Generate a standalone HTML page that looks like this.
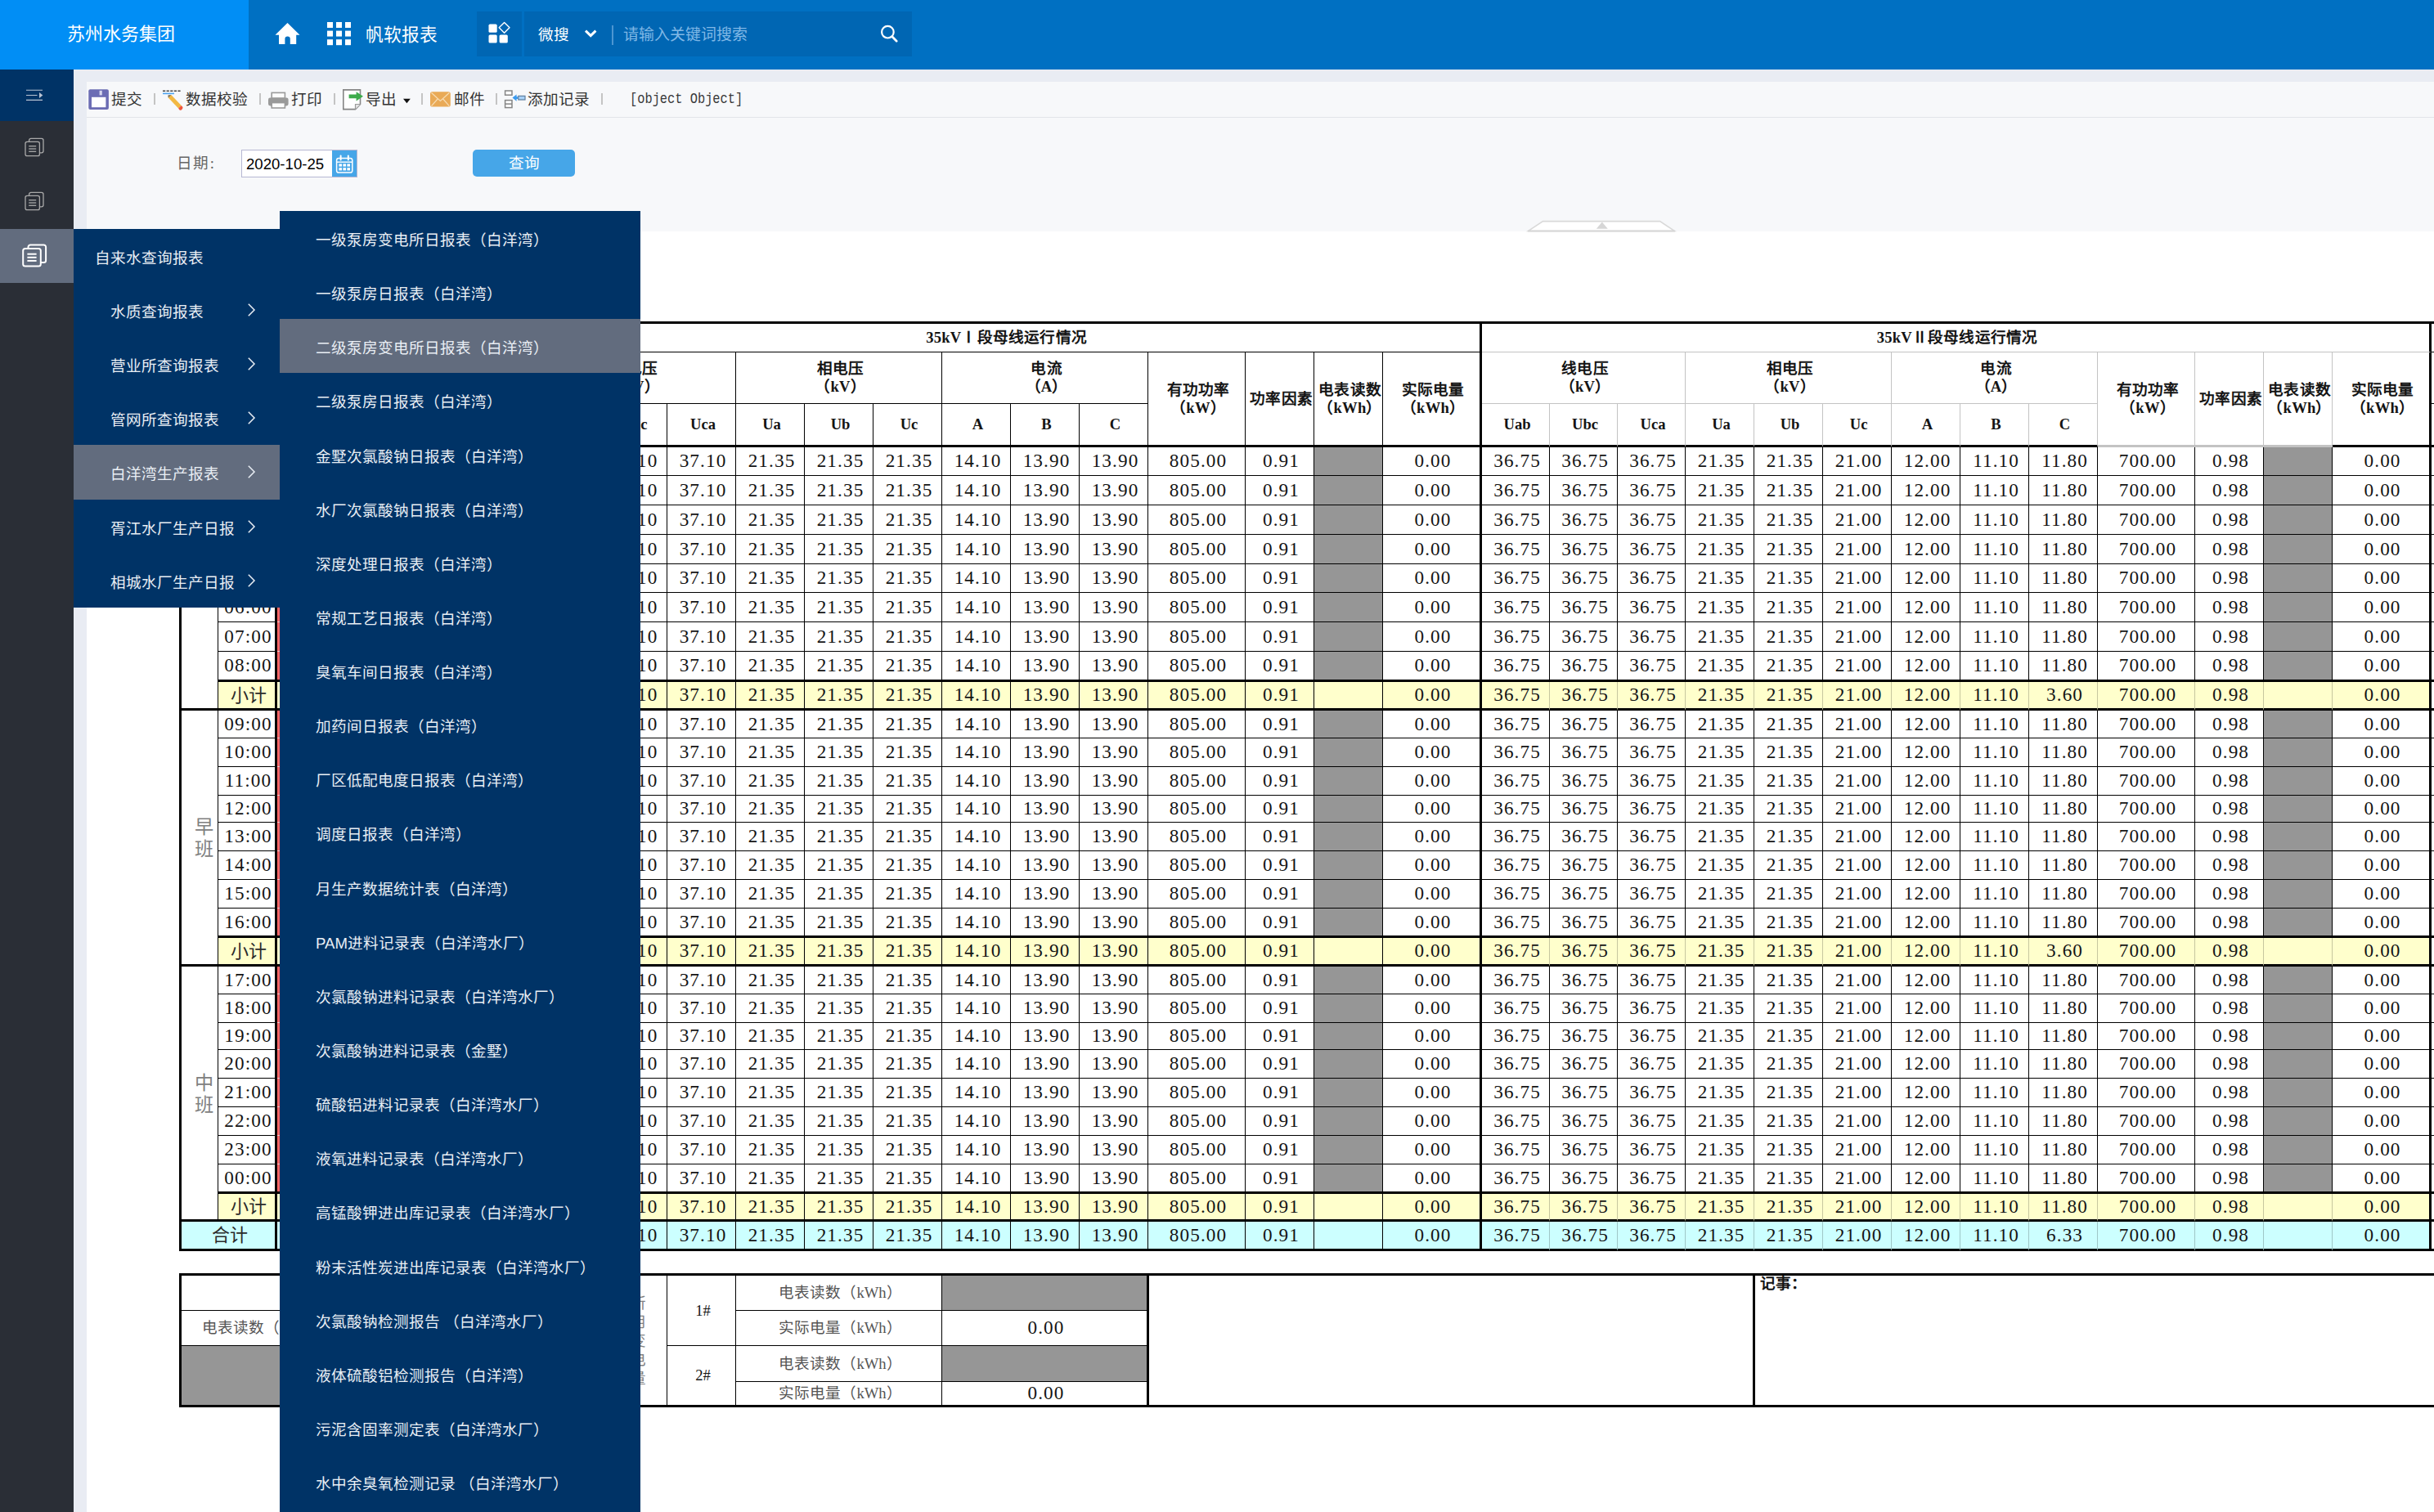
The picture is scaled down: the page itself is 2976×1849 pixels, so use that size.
<!DOCTYPE html>
<html lang="zh-CN">
<head>
<meta charset="utf-8">
<title>苏州水务集团 - 帆软报表</title>
<style>

*{box-sizing:border-box;margin:0;padding:0}
html,body{width:2976px;height:1849px;overflow:hidden}
body{position:relative;background:#e9ecf3;font-family:"Liberation Sans",sans-serif;font-size:18.6px;color:#333}
.abs{position:absolute}
svg{display:block;position:absolute;overflow:visible}

/* ---------- top header ---------- */
#hd{position:absolute;left:0;top:0;width:2976px;height:85px;background:#0070c2;color:#fff}
#logo{position:absolute;left:0;top:0;width:304px;height:85px;background:#018ef5;font-size:22px;line-height:84px;padding-left:82px;white-space:nowrap}
#brand{position:absolute;left:447px;top:0;line-height:85px;font-size:21.7px;white-space:nowrap}
.hbox{position:absolute;top:14px;height:55px;background:#0066b3}
#hb1{left:583px;width:55px}
#hb2{left:641px;width:474px}
#ws{position:absolute;left:17px;top:0;line-height:58px;font-size:18.6px;white-space:nowrap}
#hsep{position:absolute;left:107px;top:17px;width:2px;height:24px;background:#4d96d2}
#ph{position:absolute;left:121px;top:0;line-height:58px;font-size:18.9px;color:#80b8e6;white-space:nowrap}

/* ---------- left icon rail ---------- */
#rail{position:absolute;left:0;top:85px;width:90px;height:1764px;background:#2a2e36}
#rail .ham{position:absolute;left:0;top:0;width:90px;height:63px;background:#003366}
#rail .act{position:absolute;left:0;top:195px;width:90px;height:66px;background:#626c7e}

/* ---------- content ---------- */
#main{position:absolute;left:106px;top:100px;width:2870px;height:1749px;background:#fff}
#tb{position:absolute;left:0;top:0;width:2870px;height:44px;background:#f7f8fa;border-bottom:1px solid #e3e5e9;white-space:nowrap}
#tb span{position:absolute;top:0;line-height:43px;font-size:18.6px;color:#333}
#tb i{position:absolute;top:14px;width:2px;height:14px;background:#c4c4c4}
#tb .mono{font-family:"Liberation Mono",monospace;font-size:18.4px;color:#3a3a3a;transform:scaleX(.835);transform-origin:0 50%}
#pm{position:absolute;left:0;top:44px;width:2870px;height:139px;background:#f7f8fa}
#pm .lb{position:absolute;left:110px;top:41px;font-family:"Liberation Serif",serif;font-size:18.6px;line-height:30px;color:#666;letter-spacing:1.4px;white-space:nowrap}
#dt{position:absolute;left:189px;top:39px;width:142px;height:34px;background:#fff;border:1px solid #b6b7d2;font-size:18.6px;line-height:33px;color:#000;padding-left:5px}
#dt b{position:absolute;right:0;top:0;width:30px;height:32px;background:#46a6e8}
#qb{position:absolute;left:472px;top:39px;width:125px;height:33px;border-radius:5px;background:#46a6e8;color:#fff;text-align:center;line-height:33px;font-size:18.6px}

/* ---------- flyout menus ---------- */
.menu{position:absolute;background:#003366;color:#e9eef4;font-size:18.6px;white-space:nowrap}
#m1{left:90px;top:280px;width:252px;height:463px}
#m2{left:342px;top:258px;width:441px;height:1591px}
.menu div{position:absolute;left:0;width:100%;height:66.2px;line-height:71px}
.menu .on{background:#626c7e}
#m1 div{padding-left:45px}
#m1 .t{padding-left:26px}
#m2 div{padding-left:44px}
#m1 svg{left:213px;top:25px}

/* ---------- report tables ---------- */
table{position:absolute;border-collapse:separate;border-spacing:0;table-layout:fixed;font-family:"Liberation Serif",serif;color:#141414;background:#fff}
td{border-right:1px solid #000;border-bottom:1px solid #000;text-align:center;vertical-align:middle;padding:0 0 2px 4px;overflow:hidden;white-space:nowrap;font-size:23.2px;letter-spacing:1.1px;line-height:24px}
td.h{font-weight:bold;font-size:18.6px;letter-spacing:.2px;line-height:22px;padding-bottom:0;white-space:normal}
td.e{font-weight:bold;font-size:18.6px;letter-spacing:0;padding-bottom:0}
td.l{border-left:3px solid #000}
td.R{border-right:3px solid #000}
tr.T td{border-top:3px solid #000}
tr.B td{border-bottom:3px solid #000}
td.B{border-bottom:3px solid #000}
td.g{border-right-color:#c3c3c3}
td.gb{border-bottom-color:#c3c3c3}
tr.y td{background:#ffffcc}
tr.c td{background:#ccffff}
td.w{background:#fff !important}
td.k{background:#969696 !important}
td.r{background:#ff6666;border-bottom-color:#ffc9c9}
td.s{color:#808080;font-size:23.2px;line-height:27px;white-space:normal;letter-spacing:0;padding:2px 0 0 10px}
td.q{color:#555;font-size:18.6px;letter-spacing:0;padding-bottom:0}
td.n{font-size:18.6px;letter-spacing:0;padding-bottom:0}
td.z{font-size:22px;letter-spacing:0;padding:1px 0 0 4px;color:#2b2b2b}
td.u{color:#808080;padding-left:0;line-height:23px}
td.q.l{padding-left:0}
td.m{text-align:left;vertical-align:top;font-weight:bold;font-size:18.6px;padding:0 0 0 6px;letter-spacing:0;line-height:20px}
tr.y td.v,tr.c td.v{border-right-color:rgba(0,0,0,.22)}

</style>
</head>
<body>
<div id="hd">
<div id="logo">苏州水务集团</div>
<svg style="left:337px;top:28px" width="29" height="26"><path fill="#fff" d="M14.5 0L29.5 14.8H25.2V26H17.8V19.6a3.2 3.2 0 0 0-6.4 0V26H4V14.8H-.5Z"/></svg>
<svg style="left:400px;top:27px" width="29" height="29" fill="#fff"><rect x="0" y="0" width="7" height="7"/><rect x="11" y="0" width="7" height="7"/><rect x="22" y="0" width="7" height="7"/><rect x="0" y="10.6" width="7" height="7"/><rect x="11" y="10.6" width="7" height="7"/><rect x="22" y="10.6" width="7" height="7"/><rect x="0" y="21.2" width="7" height="7"/><rect x="11" y="21.2" width="7" height="7"/><rect x="22" y="21.2" width="7" height="7"/></svg>
<div id="brand">帆软报表</div>
<div class="hbox" id="hb1"><svg style="left:0;top:0" width="55" height="55"><g fill="#fff"><rect x="14.5" y="15.6" width="10.2" height="10.2" rx="1.6"/><rect x="14.5" y="28.4" width="10.2" height="10.2" rx="1.6"/><rect x="27.6" y="28.4" width="10.2" height="10.2" rx="1.6"/></g><path d="M33.6 13.4L40 19.8L33.6 26.2L27.2 19.8Z" fill="none" stroke="#fff" stroke-width="1.4" stroke-linejoin="round"/></svg></div>
<div class="hbox" id="hb2"><div id="ws">微搜</div>
<svg style="left:0;top:0" width="474" height="55"><path d="M75 23.6l6.2 6 6.2-6" fill="none" stroke="#fff" stroke-width="3"/><circle cx="444.4" cy="25.2" r="7.3" fill="none" stroke="#fff" stroke-width="2.2"/><path d="M449.8 30.8l5.4 5.4" stroke="#fff" stroke-width="2.8" stroke-linecap="round"/></svg>
<div id="hsep"></div><div id="ph">请输入关键词搜索</div></div>
</div>
<div id="rail"><div class="ham"></div><div class="act"></div>
<svg style="left:0;top:0" width="90" height="270">
<g stroke="#b9c3d3" stroke-width="1.1" fill="none"><path d="M32 25.3H52M32 31.5H45.5M32 37.4H52"/></g><path d="M48 28v7l4.4-3.5z" fill="#b9c3d3"/>
<g fill="none" stroke="#a9a9a9" stroke-width="1.3"><rect x="31" y="88.3" width="17.4" height="17.4" rx="2.2"/><path d="M35.6 88.3V86.6a2.2 2.2 0 0 1 2.2 -2.2H50.8a2.2 2.2 0 0 1 2.2 2.2V99.6a2.2 2.2 0 0 1 -2.2 2.2H48.4"/><path d="M35.2 93.7H44.2"/><path d="M35.2 97.0H44.2"/><path d="M35.2 100.3H44.2"/></g>
<g fill="none" stroke="#a9a9a9" stroke-width="1.3"><rect x="31" y="154.3" width="17.4" height="17.4" rx="2.2"/><path d="M35.6 154.3V152.6a2.2 2.2 0 0 1 2.2 -2.2H50.8a2.2 2.2 0 0 1 2.2 2.2V165.6a2.2 2.2 0 0 1 -2.2 2.2H48.4"/><path d="M35.2 159.7H44.2"/><path d="M35.2 163.0H44.2"/><path d="M35.2 166.3H44.2"/></g>
<g fill="none" stroke="#ffffff" stroke-width="2"><rect x="28.2" y="219" width="21.6" height="21.6" rx="2.6"/><path d="M34.5 219.0V217.1a2.6 2.6 0 0 1 2.6 -2.6H53.5a2.6 2.6 0 0 1 2.6 2.6V233.5a2.6 2.6 0 0 1 -2.6 2.6H49.8"/><path d="M33.4 225.7H44.6"/><path d="M33.4 229.8H44.6"/><path d="M33.4 233.9H44.6"/></g>
</svg></div>
<div id="main">
<div id="tb"><svg style="left:0;top:0" width="660" height="44">
<rect x="2.3" y="9.3" width="24.6" height="24.6" rx="2" fill="#6c6db4"/><rect x="6" y="18.8" width="17.4" height="12.4" fill="#fff"/><rect x="15.6" y="10.8" width="3.2" height="5.6" fill="#d6d6ee"/>
<path d="M93 11.2H115" stroke="#444" stroke-width="1.6" stroke-dasharray="3.2 1.4"/><path d="M93 14.4H107" stroke="#4da3f0" stroke-width="1.6"/>
<path d="M99.5 16.5l3.8-.6 12.4 13.2-3.6 3.4L99.8 19.6z" fill="#f2b844"/><path d="M99.5 16.5l3.8-.6-3.5 3.7z" fill="#6e6e6e"/><path d="M115.7 29.1l1.3 1.5a2 2 0 0 1-.1 2.7l-.9.9a2 2 0 0 1-2.7 0l-1.2-1.7z" fill="#f0563c"/>
<rect x="222" y="19.4" width="24.6" height="10" rx="2.4" fill="#9a9a9a"/><rect x="226.2" y="13.4" width="16.2" height="6.6" fill="#fdfdfd" stroke="#9a9a9a" stroke-width="1.6"/><rect x="226.2" y="25.6" width="16.2" height="6.4" fill="#fdfdfd" stroke="#9a9a9a" stroke-width="1.6"/>
<path d="M313.8 9.9H334.5V27.5L328.5 33.6H313.8Z" fill="#fff" stroke="#858585" stroke-width="1.6"/><path d="M334.5 27.5H328.5V33.6" fill="#e6e6e6" stroke="#9a9a9a" stroke-width="1.2"/>
<path d="M320.6 15.4H329.6V12.2L338 17.8L329.6 23.4V20.2H320.6Z" fill="#3dab4b"/>
<path d="M387 20.8H395.8L391.4 26.2Z" fill="#111"/>
<rect x="420" y="12.2" width="24.8" height="18.4" rx="2.6" fill="#e9aa57"/><path d="M421.5 13.5L432.4 23.4L443.3 13.5M421.5 29.6L429.3 20.8M443.3 29.6L435.5 20.8" fill="none" stroke="#f7dcb2" stroke-width="1.3"/>
<g fill="#fff" stroke="#858585" stroke-width="1.5"><rect x="511.6" y="11" width="8.4" height="5.2"/><rect x="511.6" y="22.6" width="8.4" height="9"/><path d="M511.6 27.1H520"/></g>
<path d="M520.4 19.6l5.2-4.2v2.8h1.8v2.8h-1.8v2.8z" fill="#3c9bef"/><rect x="527.8" y="17.4" width="8.2" height="4.6" fill="#a9d1f7" stroke="#5f7f9f" stroke-width="1.2"/>
</svg>
<span style="left:30px">提交</span><i style="left:82px"></i>
<span style="left:121px">数据校验</span><i style="left:211px"></i>
<span style="left:250px">打印</span><i style="left:302px"></i>
<span style="left:341px">导出</span><i style="left:409px"></i>
<span style="left:449px">邮件</span><i style="left:500px"></i>
<span style="left:539px">添加记录</span><i style="left:629px"></i>
<span class="mono" style="left:664px">[object Object]</span>
</div>
<div id="pm">
<div class="lb">日期:</div>
<div id="dt">2020-10-25<b><svg style="left:0;top:0" width="30" height="32"><rect x="5.6" y="9.4" width="19.2" height="17.6" rx="2.6" fill="none" stroke="#fff" stroke-width="1.5"/><path d="M5.6 14.2H24.8" stroke="#fff" stroke-width="1.4"/><path d="M10.6 6.6V11.6M19.8 6.6V11.6" stroke="#fff" stroke-width="2" stroke-linecap="round"/><g fill="#fff"><rect x="8.4" y="16.4" width="3.6" height="3.2"/><rect x="13.4" y="16.4" width="3.6" height="3.2"/><rect x="18.4" y="16.4" width="3.6" height="3.2"/><rect x="8.4" y="21.2" width="3.6" height="3.2"/><rect x="13.4" y="21.2" width="3.6" height="3.2"/><rect x="18.4" y="21.2" width="3.6" height="3.2"/></g></svg></b></div>
<div id="qb">查询</div>
<svg style="left:1760px;top:124px" width="186" height="16"><path d="M2.6 14.4L20.5 2.6H163.6L181.4 14.4Z" fill="#fff" stroke="#d9d9d9" stroke-width="1.6"/><path d="M2 14.6H182" stroke="#d6d6d6" stroke-width="1.6"/><path d="M92.8 3.4L99.8 11.8H85.8Z" fill="#d6d6d6"/></svg>
</div>
</div>
<table id="t1" style="left:219px;top:393px;width:2838px"><colgroup><col style="width:48px"><col style="width:72px"><col style="width:103px"><col style="width:103px"><col style="width:103px"><col style="width:84px"><col style="width:84px"><col style="width:84px"><col style="width:84px"><col style="width:84px"><col style="width:84px"><col style="width:84px"><col style="width:84px"><col style="width:84px"><col style="width:119px"><col style="width:84px"><col style="width:84px"><col style="width:121px"><col style="width:83px"><col style="width:83px"><col style="width:83px"><col style="width:84px"><col style="width:84px"><col style="width:84px"><col style="width:84px"><col style="width:84px"><col style="width:84px"><col style="width:119px"><col style="width:84px"><col style="width:84px"><col style="width:121px"><col style="width:84px"></colgroup>
<tr style="height:38px" class="T"><td class="h l B" rowspan="3">班次</td><td class="h R B" rowspan="3">时间</td><td class="h" colspan="3">主变运行情况</td><td class="h R" colspan="13">35kVⅠ段母线运行情况</td><td class="h R gb" colspan="13">35kVⅡ段母线运行情况</td><td class="h"></td></tr><tr style="height:63px"><td class="h B" rowspan="2">档位</td><td class="h B" rowspan="2">油温</td><td class="h B" rowspan="2">绕温</td><td class="h" colspan="3">线电压<br>（kV）</td><td class="h" colspan="3">相电压<br>（kV）</td><td class="h" colspan="3">电流<br>（A）</td><td class="h B" rowspan="2">有功功率<br>（kW）</td><td class="h B" rowspan="2">功率因素</td><td class="h B" rowspan="2">电表读数<br>（kWh）</td><td class="h R B" rowspan="2">实际电量<br>（kWh）</td><td class="h g gb" colspan="3">线电压<br>（kV）</td><td class="h g gb" colspan="3">相电压<br>（kV）</td><td class="h g gb" colspan="3">电流<br>（A）</td><td class="h g gb B" rowspan="2">有功功率<br>（kW）</td><td class="h g gb B" rowspan="2">功率因素</td><td class="h g gb B" rowspan="2">电表读数<br>（kWh）</td><td class="h R B" rowspan="2">实际电量<br>（kWh）</td><td class="h"></td></tr><tr style="height:53px" class="B"><td class="e">Uab</td><td class="e">Ubc</td><td class="e">Uca</td><td class="e">Ua</td><td class="e">Ub</td><td class="e">Uc</td><td class="e">A</td><td class="e">B</td><td class="e">C</td><td class="e g">Uab</td><td class="e g">Ubc</td><td class="e g">Uca</td><td class="e g">Ua</td><td class="e g">Ub</td><td class="e g">Uc</td><td class="e g">A</td><td class="e g">B</td><td class="e g">C</td><td class="e"></td></tr>
<tr style="height:35px"><td class="s l B" rowspan="9">夜<br>班</td><td class="R">01:00</td><td class="r"></td><td></td><td></td><td>37.10</td><td>37.10</td><td>37.10</td><td>21.35</td><td>21.35</td><td>21.35</td><td>14.10</td><td>13.90</td><td>13.90</td><td>805.00</td><td>0.91</td><td class="k"></td><td class="R">0.00</td><td>36.75</td><td>36.75</td><td>36.75</td><td>21.35</td><td>21.35</td><td>21.00</td><td>12.00</td><td>11.10</td><td>11.80</td><td>700.00</td><td>0.98</td><td class="k"></td><td class="R">0.00</td><td></td></tr>
<tr style="height:36px"><td class="R">02:00</td><td class="r"></td><td></td><td></td><td>37.10</td><td>37.10</td><td>37.10</td><td>21.35</td><td>21.35</td><td>21.35</td><td>14.10</td><td>13.90</td><td>13.90</td><td>805.00</td><td>0.91</td><td class="k"></td><td class="R">0.00</td><td>36.75</td><td>36.75</td><td>36.75</td><td>21.35</td><td>21.35</td><td>21.00</td><td>12.00</td><td>11.10</td><td>11.80</td><td>700.00</td><td>0.98</td><td class="k"></td><td class="R">0.00</td><td></td></tr>
<tr style="height:36px"><td class="R">03:00</td><td class="r"></td><td></td><td></td><td>37.10</td><td>37.10</td><td>37.10</td><td>21.35</td><td>21.35</td><td>21.35</td><td>14.10</td><td>13.90</td><td>13.90</td><td>805.00</td><td>0.91</td><td class="k"></td><td class="R">0.00</td><td>36.75</td><td>36.75</td><td>36.75</td><td>21.35</td><td>21.35</td><td>21.00</td><td>12.00</td><td>11.10</td><td>11.80</td><td>700.00</td><td>0.98</td><td class="k"></td><td class="R">0.00</td><td></td></tr>
<tr style="height:36px"><td class="R">04:00</td><td class="r"></td><td></td><td></td><td>37.10</td><td>37.10</td><td>37.10</td><td>21.35</td><td>21.35</td><td>21.35</td><td>14.10</td><td>13.90</td><td>13.90</td><td>805.00</td><td>0.91</td><td class="k"></td><td class="R">0.00</td><td>36.75</td><td>36.75</td><td>36.75</td><td>21.35</td><td>21.35</td><td>21.00</td><td>12.00</td><td>11.10</td><td>11.80</td><td>700.00</td><td>0.98</td><td class="k"></td><td class="R">0.00</td><td></td></tr>
<tr style="height:35px"><td class="R">05:00</td><td class="r"></td><td></td><td></td><td>37.10</td><td>37.10</td><td>37.10</td><td>21.35</td><td>21.35</td><td>21.35</td><td>14.10</td><td>13.90</td><td>13.90</td><td>805.00</td><td>0.91</td><td class="k"></td><td class="R">0.00</td><td>36.75</td><td>36.75</td><td>36.75</td><td>21.35</td><td>21.35</td><td>21.00</td><td>12.00</td><td>11.10</td><td>11.80</td><td>700.00</td><td>0.98</td><td class="k"></td><td class="R">0.00</td><td></td></tr>
<tr style="height:36px"><td class="R">06:00</td><td class="r"></td><td></td><td></td><td>37.10</td><td>37.10</td><td>37.10</td><td>21.35</td><td>21.35</td><td>21.35</td><td>14.10</td><td>13.90</td><td>13.90</td><td>805.00</td><td>0.91</td><td class="k"></td><td class="R">0.00</td><td>36.75</td><td>36.75</td><td>36.75</td><td>21.35</td><td>21.35</td><td>21.00</td><td>12.00</td><td>11.10</td><td>11.80</td><td>700.00</td><td>0.98</td><td class="k"></td><td class="R">0.00</td><td></td></tr>
<tr style="height:36px"><td class="R">07:00</td><td class="r"></td><td></td><td></td><td>37.10</td><td>37.10</td><td>37.10</td><td>21.35</td><td>21.35</td><td>21.35</td><td>14.10</td><td>13.90</td><td>13.90</td><td>805.00</td><td>0.91</td><td class="k"></td><td class="R">0.00</td><td>36.75</td><td>36.75</td><td>36.75</td><td>21.35</td><td>21.35</td><td>21.00</td><td>12.00</td><td>11.10</td><td>11.80</td><td>700.00</td><td>0.98</td><td class="k"></td><td class="R">0.00</td><td></td></tr>
<tr style="height:37px" class="B"><td class="R">08:00</td><td class="r"></td><td></td><td></td><td>37.10</td><td>37.10</td><td>37.10</td><td>21.35</td><td>21.35</td><td>21.35</td><td>14.10</td><td>13.90</td><td>13.90</td><td>805.00</td><td>0.91</td><td class="k"></td><td class="R">0.00</td><td>36.75</td><td>36.75</td><td>36.75</td><td>21.35</td><td>21.35</td><td>21.00</td><td>12.00</td><td>11.10</td><td>11.80</td><td>700.00</td><td>0.98</td><td class="k"></td><td class="R">0.00</td><td></td></tr>
<tr style="height:35px" class="y B"><td class="R z">小计</td><td></td><td></td><td></td><td>37.10</td><td>37.10</td><td>37.10</td><td>21.35</td><td>21.35</td><td>21.35</td><td>14.10</td><td>13.90</td><td>13.90</td><td>805.00</td><td>0.91</td><td></td><td class="R">0.00</td><td class="v">36.75</td><td class="v">36.75</td><td class="v">36.75</td><td class="v">21.35</td><td class="v">21.35</td><td class="v">21.00</td><td class="v">12.00</td><td class="v">11.10</td><td class="v">3.60</td><td class="v">700.00</td><td class="v">0.98</td><td class="v"></td><td class="R">0.00</td><td class="w"></td></tr>
<tr style="height:34px"><td class="s l B" rowspan="9">早<br>班</td><td class="R">09:00</td><td class="r"></td><td></td><td></td><td>37.10</td><td>37.10</td><td>37.10</td><td>21.35</td><td>21.35</td><td>21.35</td><td>14.10</td><td>13.90</td><td>13.90</td><td>805.00</td><td>0.91</td><td class="k"></td><td class="R">0.00</td><td>36.75</td><td>36.75</td><td>36.75</td><td>21.35</td><td>21.35</td><td>21.00</td><td>12.00</td><td>11.10</td><td>11.80</td><td>700.00</td><td>0.98</td><td class="k"></td><td class="R">0.00</td><td></td></tr>
<tr style="height:35px"><td class="R">10:00</td><td class="r"></td><td></td><td></td><td>37.10</td><td>37.10</td><td>37.10</td><td>21.35</td><td>21.35</td><td>21.35</td><td>14.10</td><td>13.90</td><td>13.90</td><td>805.00</td><td>0.91</td><td class="k"></td><td class="R">0.00</td><td>36.75</td><td>36.75</td><td>36.75</td><td>21.35</td><td>21.35</td><td>21.00</td><td>12.00</td><td>11.10</td><td>11.80</td><td>700.00</td><td>0.98</td><td class="k"></td><td class="R">0.00</td><td></td></tr>
<tr style="height:35px"><td class="R">11:00</td><td class="r"></td><td></td><td></td><td>37.10</td><td>37.10</td><td>37.10</td><td>21.35</td><td>21.35</td><td>21.35</td><td>14.10</td><td>13.90</td><td>13.90</td><td>805.00</td><td>0.91</td><td class="k"></td><td class="R">0.00</td><td>36.75</td><td>36.75</td><td>36.75</td><td>21.35</td><td>21.35</td><td>21.00</td><td>12.00</td><td>11.10</td><td>11.80</td><td>700.00</td><td>0.98</td><td class="k"></td><td class="R">0.00</td><td></td></tr>
<tr style="height:33px"><td class="R">12:00</td><td class="r"></td><td></td><td></td><td>37.10</td><td>37.10</td><td>37.10</td><td>21.35</td><td>21.35</td><td>21.35</td><td>14.10</td><td>13.90</td><td>13.90</td><td>805.00</td><td>0.91</td><td class="k"></td><td class="R">0.00</td><td>36.75</td><td>36.75</td><td>36.75</td><td>21.35</td><td>21.35</td><td>21.00</td><td>12.00</td><td>11.10</td><td>11.80</td><td>700.00</td><td>0.98</td><td class="k"></td><td class="R">0.00</td><td></td></tr>
<tr style="height:35px"><td class="R">13:00</td><td class="r"></td><td></td><td></td><td>37.10</td><td>37.10</td><td>37.10</td><td>21.35</td><td>21.35</td><td>21.35</td><td>14.10</td><td>13.90</td><td>13.90</td><td>805.00</td><td>0.91</td><td class="k"></td><td class="R">0.00</td><td>36.75</td><td>36.75</td><td>36.75</td><td>21.35</td><td>21.35</td><td>21.00</td><td>12.00</td><td>11.10</td><td>11.80</td><td>700.00</td><td>0.98</td><td class="k"></td><td class="R">0.00</td><td></td></tr>
<tr style="height:35px"><td class="R">14:00</td><td class="r"></td><td></td><td></td><td>37.10</td><td>37.10</td><td>37.10</td><td>21.35</td><td>21.35</td><td>21.35</td><td>14.10</td><td>13.90</td><td>13.90</td><td>805.00</td><td>0.91</td><td class="k"></td><td class="R">0.00</td><td>36.75</td><td>36.75</td><td>36.75</td><td>21.35</td><td>21.35</td><td>21.00</td><td>12.00</td><td>11.10</td><td>11.80</td><td>700.00</td><td>0.98</td><td class="k"></td><td class="R">0.00</td><td></td></tr>
<tr style="height:35px"><td class="R">15:00</td><td class="r"></td><td></td><td></td><td>37.10</td><td>37.10</td><td>37.10</td><td>21.35</td><td>21.35</td><td>21.35</td><td>14.10</td><td>13.90</td><td>13.90</td><td>805.00</td><td>0.91</td><td class="k"></td><td class="R">0.00</td><td>36.75</td><td>36.75</td><td>36.75</td><td>21.35</td><td>21.35</td><td>21.00</td><td>12.00</td><td>11.10</td><td>11.80</td><td>700.00</td><td>0.98</td><td class="k"></td><td class="R">0.00</td><td></td></tr>
<tr style="height:36px" class="B"><td class="R">16:00</td><td class="r"></td><td></td><td></td><td>37.10</td><td>37.10</td><td>37.10</td><td>21.35</td><td>21.35</td><td>21.35</td><td>14.10</td><td>13.90</td><td>13.90</td><td>805.00</td><td>0.91</td><td class="k"></td><td class="R">0.00</td><td>36.75</td><td>36.75</td><td>36.75</td><td>21.35</td><td>21.35</td><td>21.00</td><td>12.00</td><td>11.10</td><td>11.80</td><td>700.00</td><td>0.98</td><td class="k"></td><td class="R">0.00</td><td></td></tr>
<tr style="height:35px" class="y B"><td class="R z">小计</td><td></td><td></td><td></td><td>37.10</td><td>37.10</td><td>37.10</td><td>21.35</td><td>21.35</td><td>21.35</td><td>14.10</td><td>13.90</td><td>13.90</td><td>805.00</td><td>0.91</td><td></td><td class="R">0.00</td><td class="v">36.75</td><td class="v">36.75</td><td class="v">36.75</td><td class="v">21.35</td><td class="v">21.35</td><td class="v">21.00</td><td class="v">12.00</td><td class="v">11.10</td><td class="v">3.60</td><td class="v">700.00</td><td class="v">0.98</td><td class="v"></td><td class="R">0.00</td><td class="w"></td></tr>
<tr style="height:34px"><td class="s l B" rowspan="9">中<br>班</td><td class="R">17:00</td><td class="r"></td><td></td><td></td><td>37.10</td><td>37.10</td><td>37.10</td><td>21.35</td><td>21.35</td><td>21.35</td><td>14.10</td><td>13.90</td><td>13.90</td><td>805.00</td><td>0.91</td><td class="k"></td><td class="R">0.00</td><td>36.75</td><td>36.75</td><td>36.75</td><td>21.35</td><td>21.35</td><td>21.00</td><td>12.00</td><td>11.10</td><td>11.80</td><td>700.00</td><td>0.98</td><td class="k"></td><td class="R">0.00</td><td></td></tr>
<tr style="height:35px"><td class="R">18:00</td><td class="r"></td><td></td><td></td><td>37.10</td><td>37.10</td><td>37.10</td><td>21.35</td><td>21.35</td><td>21.35</td><td>14.10</td><td>13.90</td><td>13.90</td><td>805.00</td><td>0.91</td><td class="k"></td><td class="R">0.00</td><td>36.75</td><td>36.75</td><td>36.75</td><td>21.35</td><td>21.35</td><td>21.00</td><td>12.00</td><td>11.10</td><td>11.80</td><td>700.00</td><td>0.98</td><td class="k"></td><td class="R">0.00</td><td></td></tr>
<tr style="height:33px"><td class="R">19:00</td><td class="r"></td><td></td><td></td><td>37.10</td><td>37.10</td><td>37.10</td><td>21.35</td><td>21.35</td><td>21.35</td><td>14.10</td><td>13.90</td><td>13.90</td><td>805.00</td><td>0.91</td><td class="k"></td><td class="R">0.00</td><td>36.75</td><td>36.75</td><td>36.75</td><td>21.35</td><td>21.35</td><td>21.00</td><td>12.00</td><td>11.10</td><td>11.80</td><td>700.00</td><td>0.98</td><td class="k"></td><td class="R">0.00</td><td></td></tr>
<tr style="height:35px"><td class="R">20:00</td><td class="r"></td><td></td><td></td><td>37.10</td><td>37.10</td><td>37.10</td><td>21.35</td><td>21.35</td><td>21.35</td><td>14.10</td><td>13.90</td><td>13.90</td><td>805.00</td><td>0.91</td><td class="k"></td><td class="R">0.00</td><td>36.75</td><td>36.75</td><td>36.75</td><td>21.35</td><td>21.35</td><td>21.00</td><td>12.00</td><td>11.10</td><td>11.80</td><td>700.00</td><td>0.98</td><td class="k"></td><td class="R">0.00</td><td></td></tr>
<tr style="height:35px"><td class="R">21:00</td><td class="r"></td><td></td><td></td><td>37.10</td><td>37.10</td><td>37.10</td><td>21.35</td><td>21.35</td><td>21.35</td><td>14.10</td><td>13.90</td><td>13.90</td><td>805.00</td><td>0.91</td><td class="k"></td><td class="R">0.00</td><td>36.75</td><td>36.75</td><td>36.75</td><td>21.35</td><td>21.35</td><td>21.00</td><td>12.00</td><td>11.10</td><td>11.80</td><td>700.00</td><td>0.98</td><td class="k"></td><td class="R">0.00</td><td></td></tr>
<tr style="height:35px"><td class="R">22:00</td><td class="r"></td><td></td><td></td><td>37.10</td><td>37.10</td><td>37.10</td><td>21.35</td><td>21.35</td><td>21.35</td><td>14.10</td><td>13.90</td><td>13.90</td><td>805.00</td><td>0.91</td><td class="k"></td><td class="R">0.00</td><td>36.75</td><td>36.75</td><td>36.75</td><td>21.35</td><td>21.35</td><td>21.00</td><td>12.00</td><td>11.10</td><td>11.80</td><td>700.00</td><td>0.98</td><td class="k"></td><td class="R">0.00</td><td></td></tr>
<tr style="height:35px"><td class="R">23:00</td><td class="r"></td><td></td><td></td><td>37.10</td><td>37.10</td><td>37.10</td><td>21.35</td><td>21.35</td><td>21.35</td><td>14.10</td><td>13.90</td><td>13.90</td><td>805.00</td><td>0.91</td><td class="k"></td><td class="R">0.00</td><td>36.75</td><td>36.75</td><td>36.75</td><td>21.35</td><td>21.35</td><td>21.00</td><td>12.00</td><td>11.10</td><td>11.80</td><td>700.00</td><td>0.98</td><td class="k"></td><td class="R">0.00</td><td></td></tr>
<tr style="height:36px" class="B"><td class="R">00:00</td><td class="r"></td><td></td><td></td><td>37.10</td><td>37.10</td><td>37.10</td><td>21.35</td><td>21.35</td><td>21.35</td><td>14.10</td><td>13.90</td><td>13.90</td><td>805.00</td><td>0.91</td><td class="k"></td><td class="R">0.00</td><td>36.75</td><td>36.75</td><td>36.75</td><td>21.35</td><td>21.35</td><td>21.00</td><td>12.00</td><td>11.10</td><td>11.80</td><td>700.00</td><td>0.98</td><td class="k"></td><td class="R">0.00</td><td></td></tr>
<tr style="height:34px" class="y B"><td class="R z">小计</td><td></td><td></td><td></td><td>37.10</td><td>37.10</td><td>37.10</td><td>21.35</td><td>21.35</td><td>21.35</td><td>14.10</td><td>13.90</td><td>13.90</td><td>805.00</td><td>0.91</td><td></td><td class="R">0.00</td><td class="v">36.75</td><td class="v">36.75</td><td class="v">36.75</td><td class="v">21.35</td><td class="v">21.35</td><td class="v">21.00</td><td class="v">12.00</td><td class="v">11.10</td><td class="v">11.80</td><td class="v">700.00</td><td class="v">0.98</td><td class="v"></td><td class="R">0.00</td><td class="w"></td></tr>
<tr class="c B" style="height:36px"><td class="l R z" colspan="2">合计</td><td></td><td></td><td></td><td>37.10</td><td>37.10</td><td>37.10</td><td>21.35</td><td>21.35</td><td>21.35</td><td>14.10</td><td>13.90</td><td>13.90</td><td>805.00</td><td>0.91</td><td></td><td class="R">0.00</td><td class="v">36.75</td><td class="v">36.75</td><td class="v">36.75</td><td class="v">21.35</td><td class="v">21.35</td><td class="v">21.00</td><td class="v">12.00</td><td class="v">11.10</td><td class="v">6.33</td><td class="v">700.00</td><td class="v">0.98</td><td class="v"></td><td class="R">0.00</td><td class="w"></td></tr>
</table>
<table id="t2" style="left:219px;top:1557px;width:2838px"><colgroup><col style="width:204px"><col style="width:161px"><col style="width:161px"><col style="width:71px"><col style="width:84px"><col style="width:252px"><col style="width:253px"><col style="width:741px"><col style="width:911px"></colgroup>
<tr class="T" style="height:46px"><td class="q l"></td><td class="B" rowspan="4"></td><td class="B" rowspan="4"></td><td class="q B u" rowspan="4">所<br>用<br>变<br>电<br>量</td><td class="n" rowspan="2">1#</td><td class="q">电表读数（kWh）</td><td class="k R"></td><td class="R B" rowspan="4"></td><td class="m B" rowspan="4">记事：</td></tr>
<tr style="height:43px"><td class="q l">电表读数（kWh）</td><td class="q">实际电量（kWh）</td><td class="R">0.00</td></tr>
<tr style="height:44px"><td class="k l B" rowspan="2"></td><td class="n B" rowspan="2">2#</td><td class="q">电表读数（kWh）</td><td class="k R"></td></tr>
<tr class="B" style="height:31px"><td class="q">实际电量（kWh）</td><td class="R">0.00</td></tr>
</table>
<div class="menu" id="m1">
<div class="t" style="top:0">自来水查询报表</div>
<div style="top:66.1px">水质查询报表<svg width="9" height="16"><path d="M.8 .8L8 8L.8 15.2" fill="none" stroke="#e9eef4" stroke-width="1.5"/></svg></div>
<div style="top:132.3px">营业所查询报表<svg width="9" height="16"><path d="M.8 .8L8 8L.8 15.2" fill="none" stroke="#e9eef4" stroke-width="1.5"/></svg></div>
<div style="top:198.4px">管网所查询报表<svg width="9" height="16"><path d="M.8 .8L8 8L.8 15.2" fill="none" stroke="#e9eef4" stroke-width="1.5"/></svg></div>
<div class="on" style="top:264px;height:67px;line-height:72px">白洋湾生产报表<svg width="9" height="16"><path d="M.8 .8L8 8L.8 15.2" fill="none" stroke="#e9eef4" stroke-width="1.5"/></svg></div>
<div style="top:330.6px">胥江水厂生产日报<svg width="9" height="16"><path d="M.8 .8L8 8L.8 15.2" fill="none" stroke="#e9eef4" stroke-width="1.5"/></svg></div>
<div style="top:396.8px">相城水厂生产日报<svg width="9" height="16"><path d="M.8 .8L8 8L.8 15.2" fill="none" stroke="#e9eef4" stroke-width="1.5"/></svg></div>
</div>
<div class="menu" id="m2">
<div style="top:0.0px">一级泵房变电所日报表（白洋湾）</div>
<div style="top:66.1px">一级泵房日报表（白洋湾）</div>
<div class="on" style="top:132.3px">二级泵房变电所日报表（白洋湾）</div>
<div style="top:198.4px">二级泵房日报表（白洋湾）</div>
<div style="top:264.5px">金墅次氯酸钠日报表（白洋湾）</div>
<div style="top:330.6px">水厂次氯酸钠日报表（白洋湾）</div>
<div style="top:396.8px">深度处理日报表（白洋湾）</div>
<div style="top:462.9px">常规工艺日报表（白洋湾）</div>
<div style="top:529.0px">臭氧车间日报表（白洋湾）</div>
<div style="top:595.2px">加药间日报表（白洋湾）</div>
<div style="top:661.3px">厂区低配电度日报表（白洋湾）</div>
<div style="top:727.4px">调度日报表（白洋湾）</div>
<div style="top:793.6px">月生产数据统计表（白洋湾）</div>
<div style="top:859.7px">PAM进料记录表（白洋湾水厂）</div>
<div style="top:925.8px">次氯酸钠进料记录表（白洋湾水厂）</div>
<div style="top:991.9px">次氯酸钠进料记录表（金墅）</div>
<div style="top:1058.1px">硫酸铝进料记录表（白洋湾水厂）</div>
<div style="top:1124.2px">液氧进料记录表（白洋湾水厂）</div>
<div style="top:1190.3px">高锰酸钾进出库记录表（白洋湾水厂）</div>
<div style="top:1256.5px">粉末活性炭进出库记录表（白洋湾水厂）</div>
<div style="top:1322.6px">次氯酸钠检测报告 （白洋湾水厂）</div>
<div style="top:1388.7px">液体硫酸铝检测报告（白洋湾）</div>
<div style="top:1454.9px">污泥含固率测定表（白洋湾水厂）</div>
<div style="top:1521.0px">水中余臭氧检测记录 （白洋湾水厂）</div>
</div>
</body>
</html>
